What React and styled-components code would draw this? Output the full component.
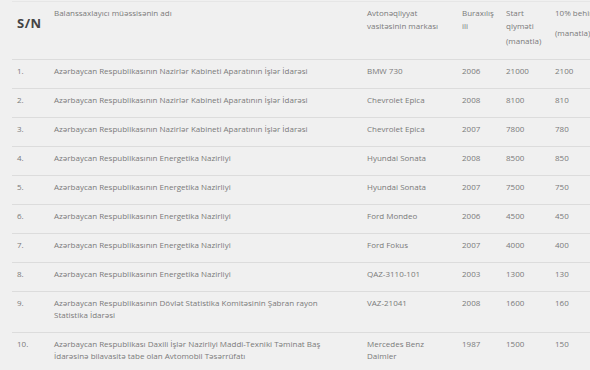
import styled, { createGlobalStyle } from "styled-components";

const rows = [
  { n: "1.", org: ["Azərbaycan Respublikasının Nazirlər Kabineti Aparatının İşlər İdarəsi"], car: ["BMW 730"], year: "2006", start: "21000", ten: "2100" },
  { n: "2.", org: ["Azərbaycan Respublikasının Nazirlər Kabineti Aparatının İşlər İdarəsi"], car: ["Chevrolet Epica"], year: "2008", start: "8100", ten: "810" },
  { n: "3.", org: ["Azərbaycan Respublikasının Nazirlər Kabineti Aparatının İşlər İdarəsi"], car: ["Chevrolet Epica"], year: "2007", start: "7800", ten: "780" },
  { n: "4.", org: ["Azərbaycan Respublikasının Energetika Nazirliyi"], car: ["Hyundai Sonata"], year: "2008", start: "8500", ten: "850" },
  { n: "5.", org: ["Azərbaycan Respublikasının Energetika Nazirliyi"], car: ["Hyundai Sonata"], year: "2007", start: "7500", ten: "750" },
  { n: "6.", org: ["Azərbaycan Respublikasının Energetika Nazirliyi"], car: ["Ford Mondeo"], year: "2006", start: "4500", ten: "450" },
  { n: "7.", org: ["Azərbaycan Respublikasının Energetika Nazirliyi"], car: ["Ford Fokus"], year: "2007", start: "4000", ten: "400" },
  { n: "8.", org: ["Azərbaycan Respublikasının Energetika Nazirliyi"], car: ["QAZ-3110-101"], year: "2003", start: "1300", ten: "130" },
  { n: "9.", org: ["Azərbaycan Respublikasının Dövlət Statistika Komitəsinin Şabran rayon", "Statistika İdarəsi"], car: ["VAZ-21041"], year: "2008", start: "1600", ten: "160" },
  { n: "10.", org: ["Azərbaycan Respublikası Daxili İşlər Nazirliyi Maddi-Texniki Təminat Baş", "İdarəsinə bilavasitə tabe olan Avtomobil Təsərrüfatı"], car: ["Mercedes Benz", "Daimler"], year: "1987", start: "1500", ten: "150" },
];

export default function App() {
  return (
    <>
      <GlobalStyle />
      <Page>
        <Table>
          <colgroup>
            <col style={{ width: 37 }} />
            <col style={{ width: 313 }} />
            <col style={{ width: 95 }} />
            <col style={{ width: 44 }} />
            <col style={{ width: 49 }} />
            <col style={{ width: 80 }} />
          </colgroup>
          <thead>
            <tr>
              <SnHead>S/N</SnHead>
              <Head>Balanssaxlayıcı müəssisənin adı</Head>
              <Head>Avtonəqliyyat<br />vasitəsinin markası</Head>
              <Head>Buraxılış<br />ili</Head>
              <Head>Start<br />qiymәti<Gap>(manatla)</Gap></Head>
              <Head>10% behində<Gap $big>(manatla)</Gap></Head>
            </tr>
          </thead>
          <tbody>
            {rows.map((r) => (
              <tr key={r.n}>
                <Cell>{r.n}</Cell>
                <Cell>{r.org.map((l, i) => <Line key={i}>{l}</Line>)}</Cell>
                <Cell>{r.car.map((l, i) => <Line key={i}>{l}</Line>)}</Cell>
                <Cell>{r.year}</Cell>
                <Cell>{r.start}</Cell>
                <Cell>{r.ten}</Cell>
              </tr>
            ))}
          </tbody>
        </Table>
      </Page>
    </>
  );
}

const GlobalStyle = createGlobalStyle`
  html, body {
    margin: 0;
    padding: 0;
    background: #f0f0f0;
    overflow: hidden;
  }
`;

const Page = styled.div`
  width: 590px;
  height: 370px;
  overflow: hidden;
  padding: 1px 0 0 12px;
  box-sizing: border-box;
  font-family: "Open Sans", sans-serif;
`;

const Table = styled.table`
  width: 618px;
  table-layout: fixed;
  border-collapse: collapse;
  border-top: 1px solid #e6e6e6;
  font-size: 8px;
  line-height: 13px;
  color: #7a7a7a;
`;

const Head = styled.th`
  text-align: left;
  vertical-align: top;
  font-weight: 400;
  padding: 4px 5px 0 5px;
  height: 58px;
  box-sizing: border-box;
  border-bottom: 1px solid #dcdcdc;
  white-space: nowrap;
`;

const SnHead = styled(Head)`
  padding-top: 15px;
  font-size: 13px;
  font-weight: 700;
  color: #444;
  letter-spacing: 0.5px;
`;

const Gap = styled.span`
  display: block;
  margin-top: ${(p) => (p.$big ? "7px" : "2px")};
`;

const Cell = styled.td`
  vertical-align: top;
  padding: 5px 5px 11px 5px;
  line-height: 12px;
  border-bottom: 1px solid #dcdcdc;
  white-space: nowrap;
  overflow: hidden;
`;

const Line = styled.span`
  display: block;
`;
